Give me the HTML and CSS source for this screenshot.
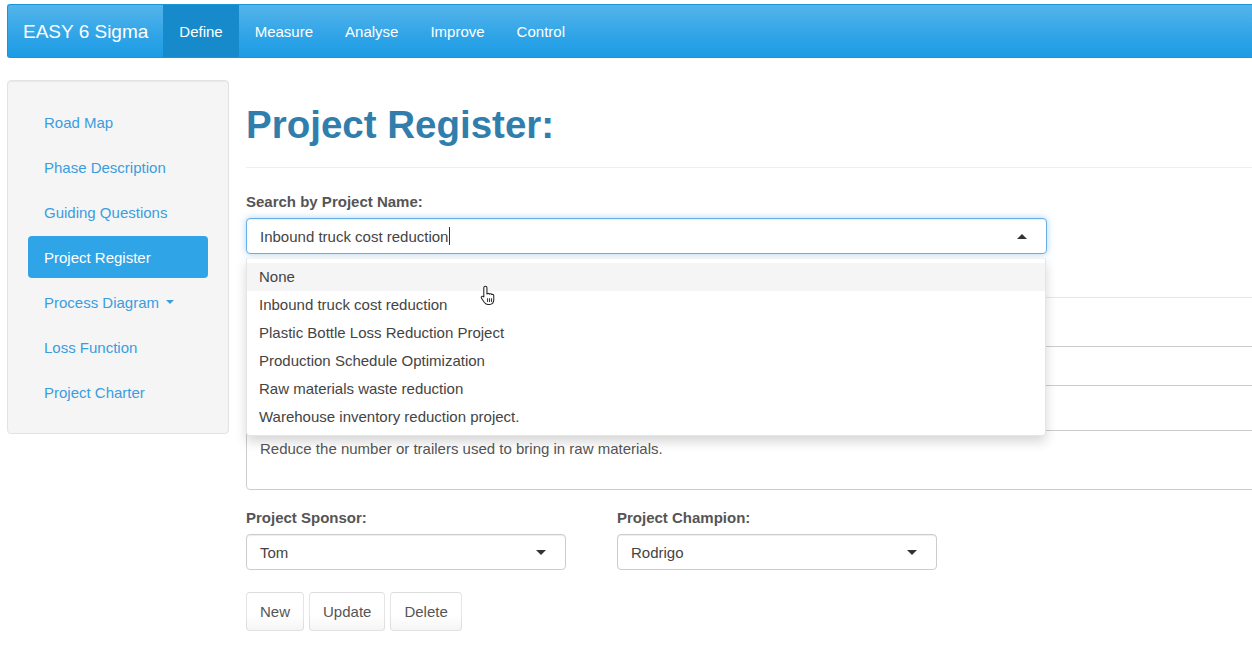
FILE: index.html
```html
<!DOCTYPE html>
<html lang="en">
<head>
<meta charset="utf-8">
<title>EASY 6 Sigma - Project Register</title>
<link rel="stylesheet" href="styles.css">
</head>
<body>
<div class="page">
  <nav class="navbar">
    <span class="brand">EASY 6 Sigma</span>
    <a class="nav-link active">Define</a>
    <a class="nav-link">Measure</a>
    <a class="nav-link">Analyse</a>
    <a class="nav-link">Improve</a>
    <a class="nav-link">Control</a>
  </nav>

  <div class="layout">
    <aside class="sidebar">
      <a class="pill">Road Map</a>
      <a class="pill">Phase Description</a>
      <a class="pill">Guiding Questions</a>
      <a class="pill active">Project Register</a>
      <a class="pill">Process Diagram <span class="pill-caret"></span></a>
      <a class="pill">Loss Function</a>
      <a class="pill">Project Charter</a>
    </aside>

    <main class="main">
      <h1 class="title">Project Register:</h1>
      <hr class="rule">

      <div class="search-group">
        <label class="field-label">Search by Project Name:</label>
        <div class="select-wrap">
          <div class="control focused">
            <span class="control-text">Inbound truck cost reduction<span class="text-caret"></span></span>
            <span class="caret-up"></span>
          </div>
          <div class="dropdown">
            <div class="option hover">None</div>
            <div class="option">Inbound truck cost reduction</div>
            <div class="option">Plastic Bottle Loss Reduction Project</div>
            <div class="option">Production Schedule Optimization</div>
            <div class="option">Raw materials waste reduction</div>
            <div class="option">Warehouse inventory reduction project.</div>
          </div>
        </div>
      </div>

      <div class="separator"></div>

      <div class="hidden-group">
        <div class="label-space"></div>
        <div class="wide-input"></div>
      </div>

      <div class="hidden-group">
        <div class="label-space"></div>
        <div class="wide-textarea">Reduce the number or trailers used to bring in raw materials.</div>
      </div>

      <div class="people-row">
        <div class="people-col">
          <label class="field-label">Project Sponsor:</label>
          <div class="control small">
            <span class="control-text">Tom</span>
            <span class="caret-down"></span>
          </div>
        </div>
        <div class="people-col">
          <label class="field-label">Project Champion:</label>
          <div class="control small">
            <span class="control-text">Rodrigo</span>
            <span class="caret-down"></span>
          </div>
        </div>
      </div>

      <div class="buttons">
        <button class="btn">New</button>
        <button class="btn">Update</button>
        <button class="btn">Delete</button>
      </div>
    </main>
  </div>

  <svg class="hand-cursor" width="18" height="21" viewBox="0 0 16 20" aria-hidden="true">
    <path d="M5.5 1.2C6.3 1.2 7 1.9 7 2.7V8.6L7.4 8.3C7.9 7.8 9.1 7.9 9.4 8.7C9.9 8.1 11.2 8.2 11.5 9.1C12.1 8.7 13.5 9 13.5 10.1V13.9C13.5 16.6 11.9 18.6 9.4 18.6H8C6.5 18.6 5.5 17.9 4.6 16.7L1.8 12.6C1.3 11.9 1.6 10.9 2.4 10.7C3 10.5 3.6 10.9 4 11.4V2.7C4 1.9 4.7 1.2 5.5 1.2Z" fill="#fff" stroke="#222" stroke-width="1" stroke-linejoin="round"/>
    <path d="M7.6 13V15.8M9.5 13V15.8M11.4 13V15.8" stroke="#222" stroke-width="0.9" stroke-linecap="round"/>
  </svg>
</div>
</body>
</html>
```

FILE: styles.css
```css
html, body {
  margin: 0;
  padding: 0;
  background: #ffffff;
}

body {
  font-family: "Liberation Sans", Arial, Helvetica, sans-serif;
  font-size: 15px;
  line-height: 21px;
  color: #555555;
  overflow: hidden;
  width: 1252px;
  height: 668px;
}

.page {
  position: relative;
  padding: 4px 0 0 7px;
}

/* ---------- navbar ---------- */
.navbar {
  box-sizing: border-box;
  height: 54px;
  display: flex;
  align-items: stretch;
  background-image: linear-gradient(#54b4eb, #2fa4e7 60%, #1d9ce5);
  border: 1px solid #1995dc;
  border-right: none;
  border-radius: 3px 0 0 3px;
}

.brand {
  flex: none;
  display: flex;
  align-items: center;
  padding: 0 15px 0 15px;
  font-size: 19px;
  color: #ffffff;
  white-space: nowrap;
}

.nav-link {
  flex: none;
  display: flex;
  align-items: center;
  padding: 0 16px;
  font-size: 15px;
  color: #ffffff;
  text-decoration: none;
  white-space: nowrap;
}

.nav-link.active {
  background-color: #178acc;
}

/* ---------- layout ---------- */
.layout {
  display: flex;
  align-items: flex-start;
  margin-top: 22px;
}

.sidebar {
  box-sizing: border-box;
  width: 222px;
  flex: none;
  padding: 20px;
  background: #f5f5f5;
  border: 1px solid #e3e3e3;
  border-radius: 4px;
  box-shadow: inset 0 1px 1px rgba(0, 0, 0, 0.05);
  display: flex;
  flex-direction: column;
  gap: 3px;
}

.pill {
  display: flex;
  align-items: center;
  height: 42px;
  padding: 0 16px;
  border-radius: 4px;
  color: #3a9de0;
  font-size: 15px;
  text-decoration: none;
}

.pill.active {
  background: #2fa4e7;
  color: #ffffff;
}

.pill-caret {
  display: inline-block;
  width: 0;
  height: 0;
  margin-left: 7px;
  border-top: 4px solid #3a9de0;
  border-left: 4px solid transparent;
  border-right: 4px solid transparent;
}

.main {
  flex: 1;
  min-width: 0;
  margin-left: 17px;
}

.title {
  margin: 24px 0 0;
  font-size: 38.5px;
  line-height: 42px;
  font-weight: 700;
  color: #317eac;
}

.rule {
  margin: 21px 0 0;
  border: 0;
  border-top: 1px solid #eeeeee;
  height: 0;
}

.field-label {
  display: block;
  font-weight: 700;
  font-size: 15px;
  line-height: 21px;
  color: #555555;
  margin-bottom: 6px;
}

.search-group {
  margin-top: 23px;
}

.select-wrap {
  position: relative;
  width: 801px;
}

.control {
  box-sizing: border-box;
  height: 36px;
  display: flex;
  align-items: center;
  justify-content: space-between;
  padding: 0 19px 0 13px;
  border: 1px solid #cccccc;
  border-radius: 4px;
  background: #ffffff;
  box-shadow: inset 0 1px 1px rgba(0, 0, 0, 0.075);
  font-size: 15px;
  color: #555555;
}

.control.focused {
  border-color: #66afe9;
  box-shadow: inset 0 1px 1px rgba(0, 0, 0, 0.075), 0 0 7px rgba(102, 175, 233, 0.55);
}

.control.small {
  width: 320px;
}

.control-text {
  display: flex;
  align-items: center;
  color: #444444;
}

.text-caret {
  display: inline-block;
  width: 1px;
  height: 18px;
  margin-left: 1px;
  background: #333333;
}

.caret-up {
  width: 0;
  height: 0;
  border-bottom: 5px solid #333333;
  border-left: 5px solid transparent;
  border-right: 5px solid transparent;
}

.caret-down {
  width: 0;
  height: 0;
  border-top: 5px solid #333333;
  border-left: 5px solid transparent;
  border-right: 5px solid transparent;
}

.dropdown {
  position: absolute;
  z-index: 10;
  top: 40px;
  left: 0;
  box-sizing: border-box;
  width: 800px;
  padding: 4px 0;
  background: #ffffff;
  border: 1px solid rgba(0, 0, 0, 0.1);
  border-top-color: rgba(0, 0, 0, 0.05);
  border-radius: 0 0 4px 4px;
  box-shadow: 0 6px 12px rgba(0, 0, 0, 0.16);
}

.option {
  height: 28px;
  line-height: 28px;
  padding: 0 12px;
  font-size: 15px;
  color: #444444;
}

.option.hover {
  background: #f5f5f5;
}

.separator {
  margin-top: 43px;
  width: 1020px;
  border-top: 1px solid #e6e6e6;
}

.hidden-group {
  margin-top: 20px;
}

.hidden-group + .hidden-group {
  margin-top: 16px;
}

.label-space {
  height: 21px;
  margin-bottom: 7px;
}

.wide-input {
  box-sizing: border-box;
  width: 1020px;
  height: 40px;
  border: 1px solid #cccccc;
  border-radius: 4px;
  background: #ffffff;
}

.wide-textarea {
  box-sizing: border-box;
  width: 1020px;
  height: 60px;
  padding: 7px 13px;
  line-height: 21px;
  border: 1px solid #cccccc;
  border-radius: 4px;
  background: #ffffff;
  color: #555555;
}

.people-row {
  display: flex;
  margin-top: 17px;
}

.people-col {
  width: 371px;
}

.buttons {
  display: flex;
  gap: 5px;
  margin-top: 22px;
}

.btn {
  box-sizing: border-box;
  height: 39px;
  padding: 0 13px;
  font-family: "Liberation Sans", Arial, Helvetica, sans-serif;
  font-size: 15px;
  color: #555555;
  background-image: linear-gradient(#ffffff, #ffffff 60%, #f5f5f5);
  border: 1px solid rgba(0, 0, 0, 0.1);
  border-bottom-color: #e2e2e2;
  border-radius: 4px;
}

.hand-cursor {
  position: absolute;
  left: 479px;
  top: 285px;
  z-index: 20;
}
```
